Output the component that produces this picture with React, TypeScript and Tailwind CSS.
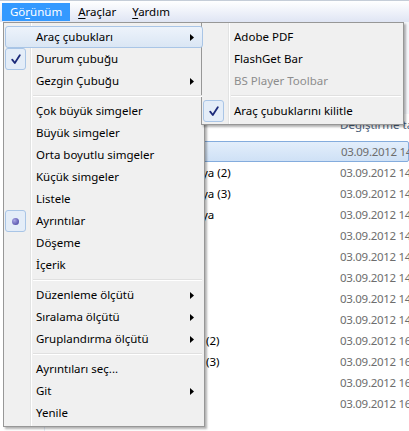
import React from 'react';

type Item =
  | { kind: 'sep' }
  | { kind: 'item'; label: string; sub?: boolean; hot?: boolean; check?: boolean; radio?: boolean; disabled?: boolean };

const sep: Item = { kind: 'sep' };
const it = (label: string, extra: Partial<Extract<Item, { kind: 'item' }>> = {}): Item => ({ kind: 'item', label, ...extra });

const mainItems: Item[] = [
  it('Araç çubukları', { sub: true, hot: true }),
  it('Durum çubuğu', { check: true }),
  it('Gezgin Çubuğu', { sub: true }),
  sep,
  it('Çok büyük simgeler'),
  it('Büyük simgeler'),
  it('Orta boyutlu simgeler'),
  it('Küçük simgeler'),
  it('Listele'),
  it('Ayrıntılar', { radio: true }),
  it('Döşeme'),
  it('İçerik'),
  sep,
  it('Düzenleme ölçütü', { sub: true }),
  it('Sıralama ölçütü', { sub: true }),
  it('Gruplandırma ölçütü', { sub: true }),
  sep,
  it('Ayrıntıları seç...'),
  it('Git', { sub: true }),
  it('Yenile'),
];

const subItems: Item[] = [
  it('Adobe PDF'),
  it('FlashGet Bar'),
  it('BS Player Toolbar', { disabled: true }),
  sep,
  it('Araç çubuklarını kilitle', { check: true }),
];

// rows of the details view behind the menus
const rows = [
  { name: '', time: '14:52', selected: true },
  { name: 'ya (2)', time: '14:52' },
  { name: 'ya (3)', time: '14:52' },
  { name: 'ya', time: '14:52' },
  { name: '', time: '14:53' },
  { name: '', time: '14:53' },
  { name: '', time: '14:53' },
  { name: '', time: '14:54' },
  { name: '', time: '14:54' },
  { name: '(2)', time: '16:10', narrow: true },
  { name: '(3)', time: '16:10', narrow: true },
  { name: '', time: '16:11' },
  { name: '', time: '16:11' },
];

function Check() {
  return (
    <svg width="10" height="11" viewBox="0 0 10 11">
      <path d="M1.2 5.6 L3.8 9 L8.8 1.2" fill="none" stroke="#1c2a7a" strokeWidth="1.8" strokeLinecap="round" strokeLinejoin="round" />
    </svg>
  );
}

function Arrow() {
  return (
    <svg width="4" height="7" viewBox="0 0 4 7" className="absolute right-[9px] top-[8px]">
      <polygon points="0,0 4,3.5 0,7" fill="#000" />
    </svg>
  );
}

function MenuList({ items }: { items: Item[] }) {
  return (
    <>
      {items.map((item, i) =>
        item.kind === 'sep' ? (
          <div key={i} className="relative z-10 h-[8px] flex flex-col justify-center pl-[28px] pr-[1px]">
            <div className="border-t border-[#e0e0e0]" />
            <div className="border-t border-white" />
          </div>
        ) : (
          <div key={i} className="relative z-10 h-[22px] flex items-center pl-[31px]">
            {item.hot && (
              <div className="absolute inset-0 rounded-[3px] border border-[#a9c5e6] bg-gradient-to-b from-[#edf3fb] to-[#dae6f4]" />
            )}
            {(item.check || item.radio) && (
              <div className="absolute left-0 top-0 w-[21px] h-[22px] rounded-[3px] border border-[#a9c5e6] bg-[#e4edf8] flex items-center justify-center">
                {item.check ? (
                  <Check />
                ) : (
                  <div className="w-[7px] h-[7px] rounded-full bg-[radial-gradient(circle_at_35%_35%,#a9a6e6,#3c3a9a)]" />
                )}
              </div>
            )}
            <span className={`relative ${item.disabled ? 'text-[#8d8d8d]' : 'text-black'}`}>{item.label}</span>
            {item.sub && <Arrow />}
          </div>
        )
      )}
    </>
  );
}

export default function App() {
  return (
    <div className="relative w-[409px] h-[431px] overflow-hidden bg-white font-['Noto_Sans',sans-serif] text-[11.5px] leading-none text-black">
      {/* menu bar */}
      <div className="h-[22px] border-t border-[#c5cdd8] bg-gradient-to-b from-white to-[#dfe5f4] flex items-start">
        <div className="ml-[2px] mt-[2px] h-[18px] px-2 flex items-center bg-[#3399ff] text-white">
          <span>Gö<span className="underline underline-offset-2">r</span>ünüm</span>
        </div>
        <div className="mt-[2px] h-[18px] px-2 flex items-center">
          <span><span className="underline underline-offset-2">A</span>raçlar</span>
        </div>
        <div className="mt-[2px] h-[18px] px-2 flex items-center">
          <span><span className="underline underline-offset-2">Y</span>ardım</span>
        </div>
      </div>

      {/* explorer body */}
      <div className="flex h-[409px]">
        <div className="w-[45px] shrink-0 border-r border-[#e5eef8] flex flex-col">
          <div className="flex-1" />
          <div className="h-[20px] mb-[-16px] pl-[4px] flex items-center text-[#1e395b]">(H:)</div>
        </div>
        <div className="flex-1 min-w-0 overflow-hidden flex flex-col">
          <div className="h-[92px] bg-[#f5f7fb]" />
          <div className="h-[22px] grid grid-cols-[295px_1fr] items-center text-[#4c607a]">
            <div />
            <div className="whitespace-nowrap">Değiştirme tarihi</div>
          </div>
          <div className="h-[5px]" />
          {rows.map((r, i) => (
            <div
              key={i}
              className={`h-[21px] grid grid-cols-[295px_1fr] items-center ${
                r.selected ? 'border border-[#84acdd] rounded-[2px] bg-gradient-to-b from-[#e3eefb] to-[#cfe1f6]' : ''
              }`}
            >
              <div className={`${r.narrow ? 'pl-[161px]' : 'pl-[157px]'} whitespace-nowrap`}>{r.name}</div>
              <div className="whitespace-nowrap tracking-[-0.3px] text-[#6d6d6d]">03.09.2012 {r.time}</div>
            </div>
          ))}
        </div>
      </div>

      {/* main dropdown */}
      <div className="absolute left-[3px] top-[22px] w-[202px] border border-[#979797] bg-[#f0f0f0] px-[1px] pt-[3px] pb-[2px] shadow-[2px_2px_2px_rgba(0,0,0,0.3)]">
        <div className="absolute left-[26px] top-0 bottom-0 border-l border-[#e2e3e3]" />
        <div className="absolute left-[27px] top-0 bottom-0 border-l border-white" />
        <MenuList items={mainItems} />
      </div>

      {/* toolbars submenu */}
      <div className="absolute left-[201px] top-[22px] w-[203px] border border-[#979797] bg-[#f0f0f0] px-[1px] pt-[3px] pb-[2px] shadow-[2px_2px_2px_rgba(0,0,0,0.3)]">
        <div className="absolute left-[26px] top-0 bottom-0 border-l border-[#e2e3e3]" />
        <div className="absolute left-[27px] top-0 bottom-0 border-l border-white" />
        <MenuList items={subItems} />
      </div>
    </div>
  );
}
